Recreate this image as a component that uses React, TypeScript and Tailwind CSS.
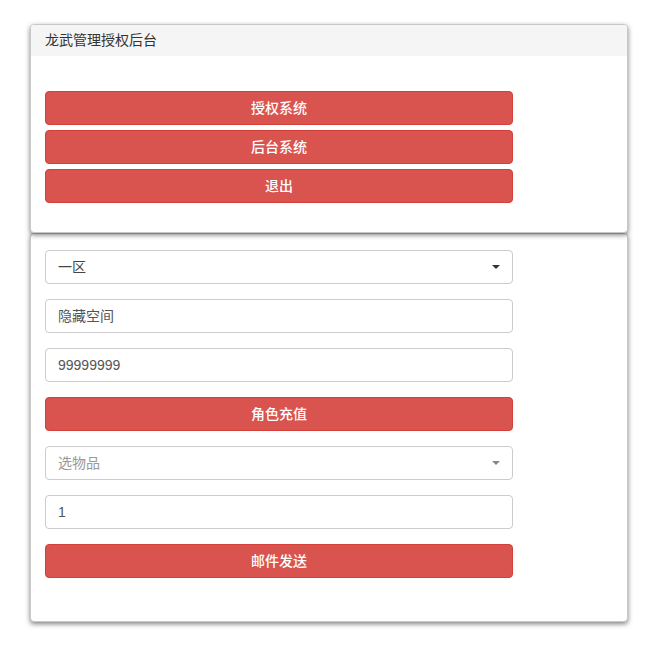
import React from "react";

const font = { fontFamily: '"Liberation Sans", "Noto Sans CJK SC", sans-serif' };

function RedButton({ label }: { label: string }) {
  return (
    <button
      type="button"
      className="w-[468px] h-[34px] rounded-[4px] border border-[#d43f3a] bg-[#d9534f] text-white text-[14px] font-medium flex items-center justify-center"
    >
      {label}
    </button>
  );
}

function Field({ value, placeholder }: { value?: string; placeholder?: string }) {
  return (
    <div className="w-[468px] h-[34px] rounded-[4px] border border-[#ccc] bg-white px-[12px] flex items-center text-[14px]">
      {value ? (
        <span className="text-[#555]">{value}</span>
      ) : (
        <span className="text-[#999]">{placeholder}</span>
      )}
    </div>
  );
}

function SelectBox({ value, placeholder }: { value?: string; placeholder?: string }) {
  return (
    <div className="w-[468px] h-[34px] rounded-[4px] border border-[#ccc] bg-white pl-[12px] pr-[12px] flex items-center justify-between text-[14px]">
      {value ? (
        <span className="text-[#444]">{value}</span>
      ) : (
        <span className="text-[#999]">{placeholder}</span>
      )}
      <svg width="8" height="4" viewBox="0 0 8 4" className="block">
        <path d="M0 0 L8 0 L4 4 Z" fill={value ? "#333" : "#888"} />
      </svg>
    </div>
  );
}

export default function App() {
  return (
    <div className="min-h-[665px] bg-white pt-[24px] pl-[30px]" style={font}>
      <div className="w-[598px] flex flex-col">
        <div className="relative z-10 rounded-[4px] border border-[#c8c8c8] bg-white shadow-[0_2px_5px_rgba(0,0,0,0.5)] overflow-hidden">
          <div className="h-[31px] bg-[#f5f5f5] px-[14px] flex items-center text-[14px] text-[#333]">
            龙武管理授权后台
          </div>
          <div className="pt-[35px] pb-[29px] px-[14px] flex flex-col gap-[5px]">
            <RedButton label="授权系统" />
            <RedButton label="后台系统" />
            <RedButton label="退出" />
          </div>
        </div>
        <div className="rounded-[4px] border border-[#c8c8c8] bg-white shadow-[0_2px_5px_rgba(0,0,0,0.5)]">
          <div className="pt-[16px] pb-[43px] px-[14px] flex flex-col gap-[15px]">
            <SelectBox value="一区" />
            <Field value="隐藏空间" />
            <Field value="99999999" />
            <RedButton label="角色充值" />
            <SelectBox placeholder="选物品" />
            <Field value="1" />
            <RedButton label="邮件发送" />
          </div>
        </div>
      </div>
    </div>
  );
}
